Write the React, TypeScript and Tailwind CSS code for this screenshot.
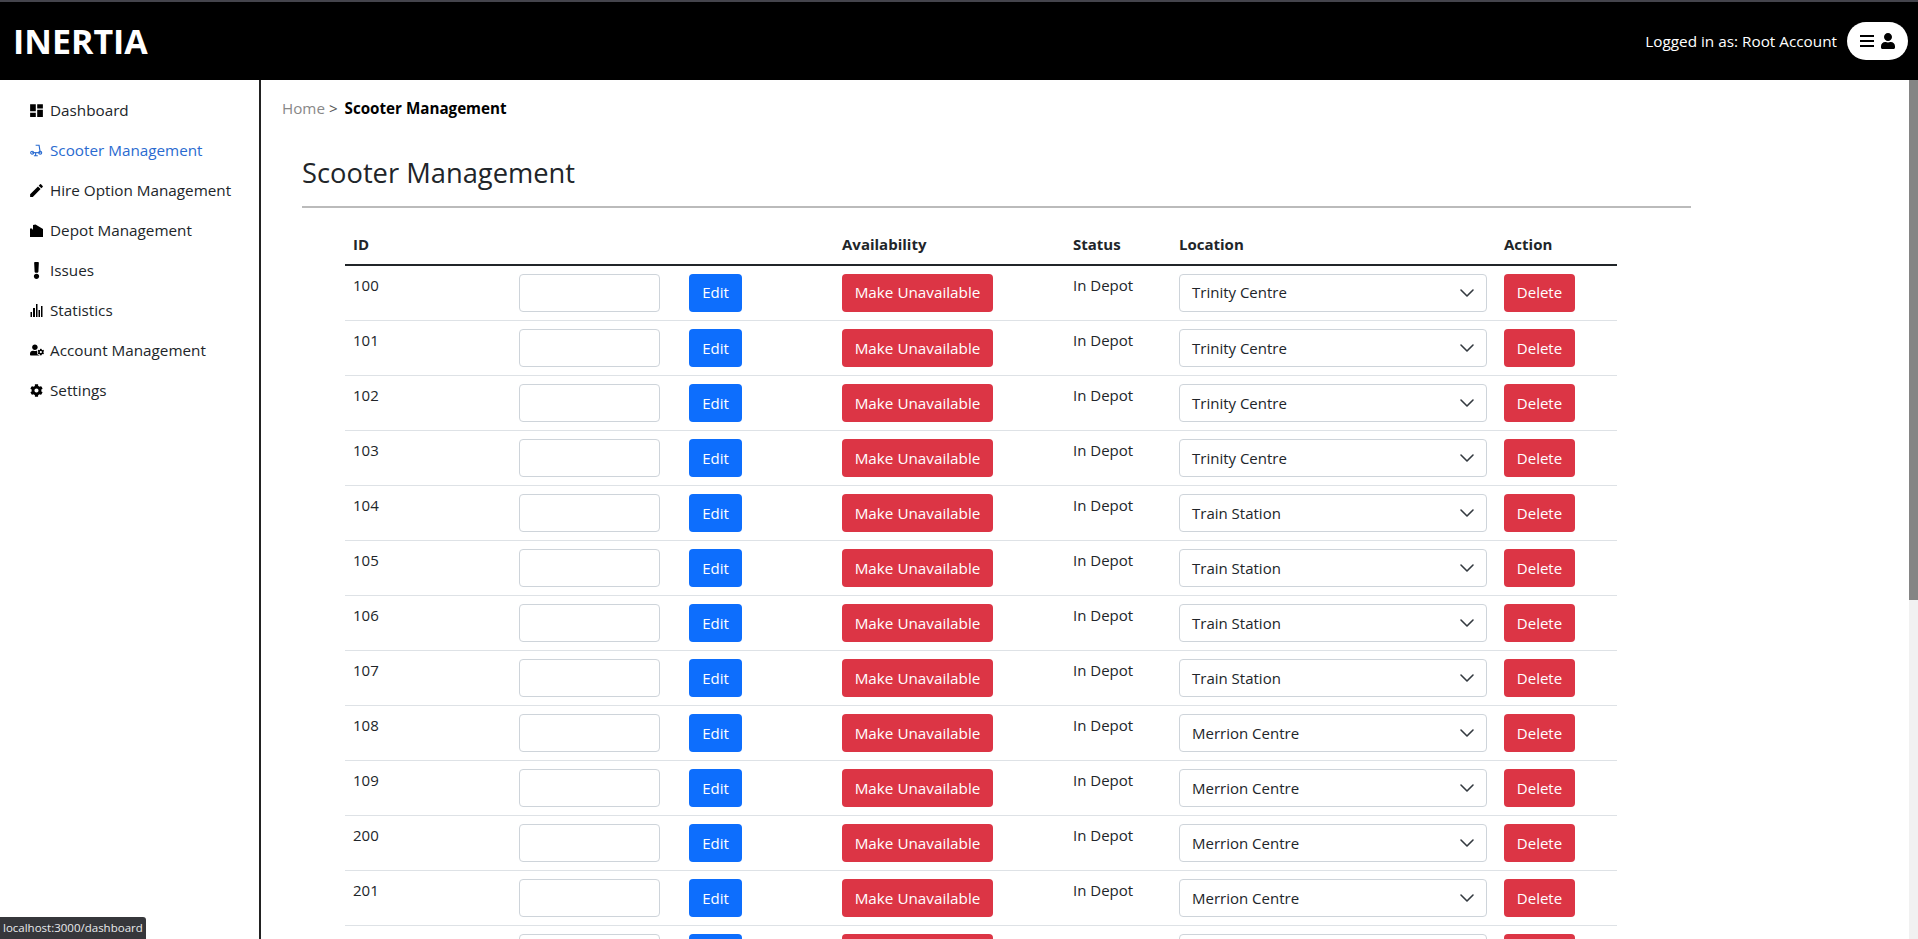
import { FaCog, FaExclamation, FaUser, FaUserCog } from "react-icons/fa";
import { MdDashboard, MdEdit } from "react-icons/md";

function ScooterIcon() {
  return (
    <svg width="15" height="15" viewBox="0 0 15 15" fill="none" stroke="currentColor" strokeWidth="1.3">
      <circle cx="2.5" cy="10" r="1.7" />
      <circle cx="11.8" cy="10" r="1.7" />
      <path d="M6.5 1.5H10.5L11.8 10" />
      <path d="M2.5 10H11.8" />
      <path d="M6.5 10V13.5M4.5 13.5H9" />
    </svg>
  );
}

function DepotIcon() {
  return (
    <svg width="13" height="13" viewBox="0 0 13 13" fill="currentColor">
      <path d="M0 13V4.5H2L3 6V1L5.5 0.5L13 5V13Z" />
    </svg>
  );
}

function StatsIcon() {
  return (
    <svg width="13" height="14" viewBox="0 0 13 14" fill="currentColor">
      <rect x="0.5" y="9" width="1.5" height="5" />
      <rect x="3" y="5" width="2" height="9" />
      <rect x="6" y="1" width="1.5" height="13" />
      <rect x="8.5" y="7" width="1.5" height="7" />
      <rect x="11" y="3" width="1.5" height="11" />
    </svg>
  );
}

const navItems = [
  { label: "Dashboard", icon: <MdDashboard size={17} className="shrink-0" /> },
  { label: "Scooter Management", icon: <ScooterIcon />, active: true },
  { label: "Hire Option Management", icon: <MdEdit size={17} className="shrink-0" /> },
  { label: "Depot Management", icon: <DepotIcon /> },
  { label: "Issues", icon: <FaExclamation size={17} className="shrink-0" /> },
  { label: "Statistics", icon: <StatsIcon /> },
  { label: "Account Management", icon: <FaUserCog size={14} className="shrink-0" /> },
  { label: "Settings", icon: <FaCog size={13} className="shrink-0" /> },
];

const scooters = [
  { id: 100, location: "Trinity Centre" },
  { id: 101, location: "Trinity Centre" },
  { id: 102, location: "Trinity Centre" },
  { id: 103, location: "Trinity Centre" },
  { id: 104, location: "Train Station" },
  { id: 105, location: "Train Station" },
  { id: 106, location: "Train Station" },
  { id: 107, location: "Train Station" },
  { id: 108, location: "Merrion Centre" },
  { id: 109, location: "Merrion Centre" },
  { id: 200, location: "Merrion Centre" },
  { id: 201, location: "Merrion Centre" },
  { id: 202, location: "Merrion Centre" },
];

function ScooterRow({ id, location }: { id: number; location: string }) {
  return (
    <tr className="border-b border-[#dee2e6] align-top text-[#212529] first:[&>td]:h-[56px]">
      <td className="h-[55px] px-2 pt-[8px] text-[15px]">{id}</td>
      <td className="px-2 pt-2">
        <input className="block h-[38px] w-[141px] rounded-[4px] border border-[#ced4da] bg-white" />
      </td>
      <td className="px-2 pt-2">
        <button className="h-[38px] w-[53px] rounded-[4px] bg-[#0d6efd] text-[15px] text-white">Edit</button>
      </td>
      <td className="px-2 pt-2">
        <button className="h-[38px] w-[151px] rounded-[4px] bg-[#dc3545] text-[15.25px] text-white">Make Unavailable</button>
      </td>
      <td className="px-2 pt-[8px] text-[15px]">In Depot</td>
      <td className="px-2 pt-2">
        <div className="flex h-[38px] w-[308px] items-center justify-between rounded-[4px] border border-[#ced4da] pl-3 pr-[11px] text-[15px]">
          <span>{location}</span>
          <svg width="16" height="16" viewBox="0 0 16 16" fill="none" stroke="#343a40" strokeWidth="1.6" strokeLinecap="round" strokeLinejoin="round">
            <path d="m2 5 6 6 6-6" />
          </svg>
        </div>
      </td>
      <td className="px-2 pt-2">
        <button className="h-[38px] w-[71px] rounded-[4px] bg-[#dc3545] text-[15px] text-white">Delete</button>
      </td>
    </tr>
  );
}

export default function App() {
  return (
    <div className="relative flex h-[939px] flex-col overflow-hidden bg-white font-['Open_Sans',sans-serif]">
      <header className="flex h-[80px] shrink-0 items-center justify-between border-t-2 border-[#44444c] bg-black pl-[13px] pr-[10px]">
        <span className="text-[34px] font-bold text-white">INERTIA</span>
        <div className="flex items-center gap-[10px]">
          <span className="text-[15.3px] text-white">Logged in as: Root Account</span>
          <button className="flex h-[38px] w-[61px] items-center justify-center gap-[6px] rounded-full bg-white text-black">
            <svg width="14" height="12" viewBox="0 0 14 12" fill="currentColor">
              <rect y="0" width="14" height="2" />
              <rect y="5" width="14" height="2" />
              <rect y="10" width="14" height="2" />
            </svg>
            <FaUser size={16} />
          </button>
        </div>
      </header>
      <div className="flex min-h-0 flex-1">
        <aside className="w-[261px] shrink-0 border-r-2 border-[#222] pl-[30px] pt-[10px]">
          {navItems.map((item) => (
            <a key={item.label} className={`flex h-[40px] items-center gap-[7px] text-[15.25px] ${item.active ? "text-[#2a6bd0]" : "text-[#212529]"}`}>
              <span className={`flex w-[13px] items-center justify-center ${item.active ? "text-[#2a6bd0]" : "text-black"}`}>{item.icon}</span>
              {item.label}
            </a>
          ))}
        </aside>
        <main className="min-w-0 flex-1 pl-[21px] pr-[27px] pt-[17px]">
          <div className="text-[15.2px] text-[#555]">
            <span className="text-[#888]">Home</span> {">"} <span className="ml-[3px] font-bold text-black">Scooter Management</span>
          </div>
          <div className="ml-[20px] mt-[33px] w-[1389px]">
            <h1 className="border-b-2 border-[#bbb] pb-[12px] text-[27.3px] font-normal text-[#212529]">Scooter Management</h1>
            <table className="ml-[43px] mt-[11px] w-[1272px] table-fixed border-collapse">
              <colgroup>
                <col className="w-[166px]" />
                <col className="w-[170px]" />
                <col className="w-[153px]" />
                <col className="w-[231px]" />
                <col className="w-[106px]" />
                <col className="w-[325px]" />
                <col className="w-[121px]" />
              </colgroup>
              <thead>
                <tr className="h-[46px] border-b-2 border-[#212529] text-left text-[15px] font-bold text-[#212529]">
                  <th className="px-2 pt-[6px]">ID</th>
                  <th />
                  <th />
                  <th className="px-2 pt-[6px]">Availability</th>
                  <th className="px-2 pt-[6px]">Status</th>
                  <th className="px-2 pt-[6px]">Location</th>
                  <th className="px-2 pt-[6px]">Action</th>
                </tr>
              </thead>
              <tbody>
                {scooters.map((s) => (
                  <ScooterRow key={s.id} id={s.id} location={s.location} />
                ))}
              </tbody>
            </table>
          </div>
        </main>
      </div>
      <div className="absolute right-0 top-[80px] h-[859px] w-[9px] bg-[#f1f1f1]">
        <div className="h-[520px] bg-[#858585]" />
      </div>
      <div className="absolute bottom-0 left-0 rounded-tr-[3px] bg-[#36373b] px-[3px] py-[3px] text-[11.5px] leading-[16px] text-[#e8eaed]">localhost:3000/dashboard</div>
    </div>
  );
}
